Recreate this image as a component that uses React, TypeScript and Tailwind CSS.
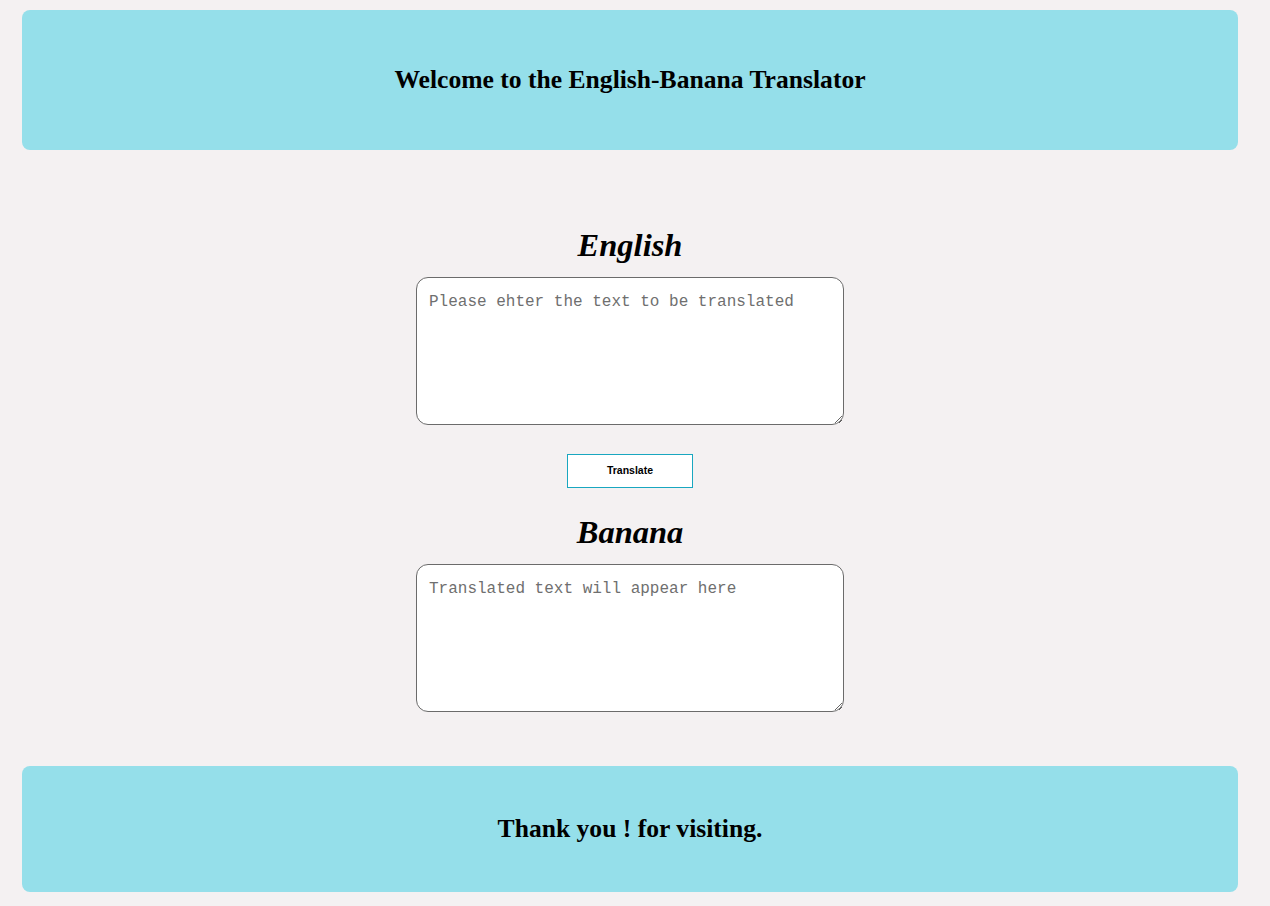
export default function App() {
  return (
    <div className="min-h-screen bg-[#f4f1f2] pt-[10px] pb-[14px] font-['Liberation_Serif',serif] text-black">
      {/* Header */}
      <header className="ml-[22px] w-[1216px] h-[140px] rounded-lg bg-[#95dfea] flex items-center justify-center">
        <h2 className="text-[25.6px] font-bold">Welcome to the English-Banana Translator</h2>
      </header>

      {/* Translator */}
      <main className="ml-[22px] w-[1216px] flex flex-col items-center pt-[78px]">
        <h1 className="text-[32.5px] leading-[35px] italic font-bold">English</h1>
        <textarea
          className="mt-[14px] w-[428px] h-[148px] rounded-xl border border-[#6b6b6b] bg-white p-3 font-['Liberation_Mono',monospace] text-[16px] placeholder:text-[#6f6f6f] outline-none"
          placeholder="Please ehter the text to be translated"
        />
        <button className="mt-[29px] w-[126px] h-[34px] border border-[#19a7c0] bg-white font-['Liberation_Sans',sans-serif] text-[10.5px] font-bold">
          Translate
        </button>
        <h1 className="mt-[27px] text-[32.5px] leading-[35px] italic font-bold">Banana</h1>
        <textarea
          className="mt-[14px] w-[428px] h-[148px] rounded-xl border border-[#6b6b6b] bg-white p-3 font-['Liberation_Mono',monospace] text-[16px] placeholder:text-[#6f6f6f] outline-none"
          placeholder="Translated text will appear here"
        />
      </main>

      {/* Footer */}
      <footer className="mt-[54px] ml-[22px] w-[1216px] h-[126px] rounded-lg bg-[#95dfea] flex items-center justify-center">
        <h2 className="text-[25.6px] font-bold">Thank you ! for visiting.</h2>
      </footer>
    </div>
  );
}
